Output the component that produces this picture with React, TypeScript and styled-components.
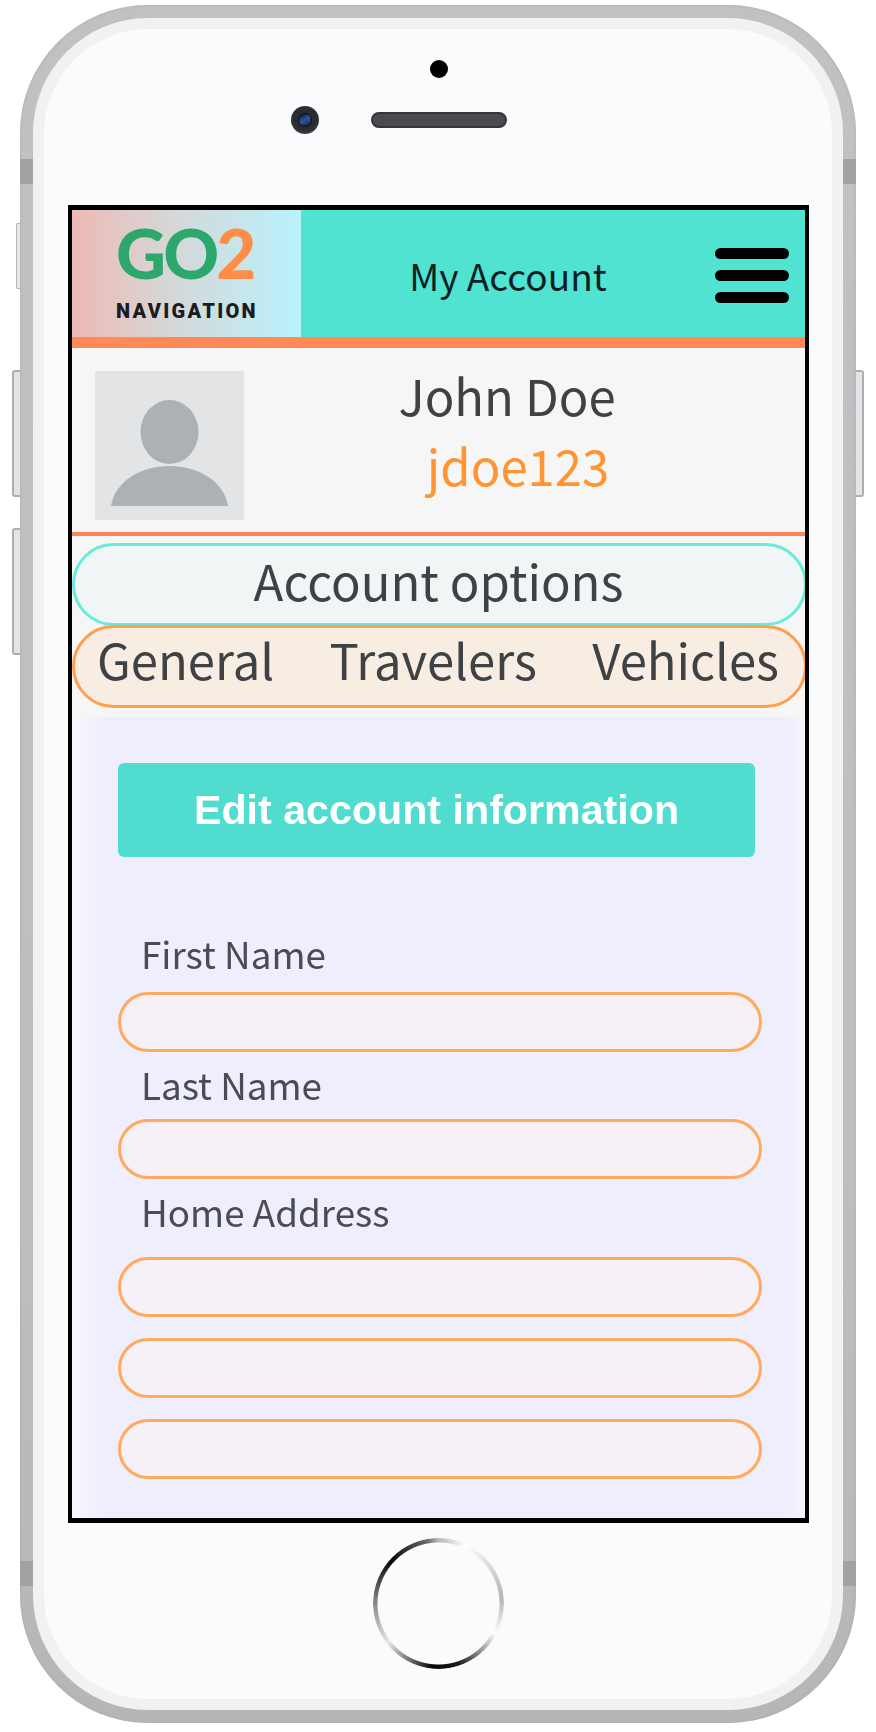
import React, { FC } from 'react';
import styled, { createGlobalStyle } from 'styled-components';

const GlobalStyle = createGlobalStyle`
  html, body {
    margin: 0;
    padding: 0;
    background: #ffffff;
  }
  * {
    box-sizing: border-box;
  }
`;

const UI_FONT = `'Noto Sans CJK SC', 'Noto Sans', sans-serif`;

const App: FC = () => {
  return (
    <Page>
      <GlobalStyle />
      <Phone>
        <MuteSwitch />
        <VolumeKey $top={365} />
        <VolumeKey $top={523} />
        <PowerKey />
        <AntennaBand $top={154} $side="left" />
        <AntennaBand $top={154} $side="right" />
        <AntennaBand $top={1556} $side="left" />
        <AntennaBand $top={1556} $side="right" />
        <Bezel>
          <Face>
            <Sensors>
              <Dot />
              <EarRow>
                <Camera>
                  <Lens />
                </Camera>
                <Speaker />
                <span />
              </EarRow>
            </Sensors>
            <Screen>
              <ScreenContent>
                <Header>
                  <LogoBox>
                    <LogoMark>
                      <LogoGreen>GO</LogoGreen>
                      <LogoOrange>2</LogoOrange>
                    </LogoMark>
                    <LogoWord>NAVIGATION</LogoWord>
                  </LogoBox>
                  <HeaderTitle>My Account</HeaderTitle>
                  <Burger>
                    <BurgerBar />
                    <BurgerBar />
                    <BurgerBar />
                  </Burger>
                </Header>
                <Profile>
                  <Avatar>
                    <svg width="149" height="149" viewBox="0 0 149 149">
                      <rect width="149" height="149" fill="#e2e4e6" />
                      <ellipse cx="74.5" cy="61" rx="29" ry="32" fill="#adb1b5" />
                      <path d="M16 135 C20 110 46 95 74.5 95 C103 95 129 110 133 135 Z" fill="#adb1b5" />
                    </svg>
                  </Avatar>
                  <Names>
                    <FullName>John Doe</FullName>
                    <UserName>jdoe123</UserName>
                  </Names>
                </Profile>
                <Divider />
                <OptionsPill>Account options</OptionsPill>
                <TabsPill>
                  <span>General</span>
                  <span>Travelers</span>
                  <span>Vehicles</span>
                </TabsPill>
                <Spacer />
                <Form>
                  <EditButton>Edit account information</EditButton>
                  <FieldLabel $first $after={3}>First Name</FieldLabel>
                  <FieldInput />
                  <FieldLabel $after={-1}>Last Name</FieldLabel>
                  <FieldInput />
                  <FieldLabel $after={10}>Home Address</FieldLabel>
                  <AddressStack>
                    <FieldInput />
                    <FieldInput />
                    <FieldInput />
                  </AddressStack>
                </Form>
              </ScreenContent>
            </Screen>
            <HomeZone>
              <HomeButton />
            </HomeZone>
          </Face>
        </Bezel>
      </Phone>
    </Page>
  );
};

export default App;

const Page = styled.div`
  width: 876px;
  height: 1732px;
  padding: 5px 20px 0;
  overflow: hidden;
`;

const Phone = styled.div`
  position: relative;
  width: 836px;
  height: 1718px;
  padding: 13px;
  border-radius: 128px;
  background: linear-gradient(180deg, #c0c1c3 0%, #bdbec0 70%, #b5b6b8 100%);
  box-shadow: inset 0 0 3px #a9aaac;
`;

const MuteSwitch = styled.div`
  position: absolute;
  left: -4px;
  top: 218px;
  width: 4px;
  height: 66px;
  background: #e6e7e8;
  border: 1px solid #b5b6b8;
  border-right: none;
  border-radius: 2px 0 0 2px;
`;

const VolumeKey = styled.div<{ $top: number }>`
  position: absolute;
  left: -8px;
  top: ${(p) => p.$top}px;
  width: 8px;
  height: 127px;
  background: #e3e4e5;
  border: 2px solid #adaeb0;
  border-right: none;
  border-radius: 3px 0 0 3px;
`;

const PowerKey = styled(VolumeKey).attrs({ $top: 365 })`
  left: auto;
  right: -8px;
  border: 2px solid #adaeb0;
  border-left: none;
  border-radius: 0 3px 3px 0;
`;

const AntennaBand = styled.div<{ $top: number; $side: 'left' | 'right' }>`
  position: absolute;
  top: ${(p) => p.$top}px;
  ${(p) => p.$side}: 0;
  width: 13px;
  height: 25px;
  background: #a1a2a4;
`;

const Bezel = styled.div`
  height: 100%;
  padding: 11px;
  border-radius: 115px;
  background: #f0f1f3;
`;

const Face = styled.div`
  height: 100%;
  padding: 0 23px 0 24px;
  border-radius: 104px;
  background: #fafbfd;
  display: flex;
  flex-direction: column;
`;

const Sensors = styled.div`
  height: 176px;
  padding-top: 31px;
  display: flex;
  flex-direction: column;
  align-items: center;
  flex-shrink: 0;
`;

const Dot = styled.div`
  width: 18px;
  height: 18px;
  border-radius: 50%;
  background: #000000;
`;

const EarRow = styled.div`
  width: 100%;
  margin-top: 28px;
  display: grid;
  grid-template-columns: 1fr 136px 1fr;
  align-items: center;
`;

const Camera = styled.div`
  justify-self: end;
  width: 28px;
  height: 28px;
  margin-right: 52px;
  border-radius: 50%;
  background: radial-gradient(circle at 50% 45%, #2a2c30 55%, #55585c 100%);
  display: grid;
  place-items: center;
`;

const Lens = styled.div`
  width: 14px;
  height: 14px;
  border-radius: 50%;
  background: linear-gradient(150deg, #0f1c3c 10%, #2e56a6 50%, #16233f 90%);
  border: 1px solid #0c0e14;
`;

const Speaker = styled.div`
  width: 136px;
  height: 16px;
  border-radius: 8px;
  background-color: #4a4b4e;
  background-image: radial-gradient(#6e6f72 35%, transparent 40%);
  background-size: 2px 2px;
  border: 2px solid #35363a;
`;

const Screen = styled.div`
  width: 741px;
  height: 1318px;
  border: 4.5px solid #000000;
  border-top-width: 5px;
  border-bottom-width: 5px;
  flex-shrink: 0;
  background: #f6f6f6;
  overflow: hidden;
`;

const ScreenContent = styled.div`
  width: calc(100% + 2px);
  height: 100%;
  display: flex;
  flex-direction: column;
  filter: blur(0.45px);
`;

const Header = styled.div`
  height: 138px;
  flex-shrink: 0;
  display: flex;
  border-bottom: 11px solid #ff8a58;
  background: #50e3d2;
`;

const LogoBox = styled.div`
  width: 229px;
  flex-shrink: 0;
  padding-left: 44px;
  padding-top: 10px;
  background: linear-gradient(90deg, #edbab4 0%, #d5d8d9 45%, #b9f2fc 100%);
`;

const LogoMark = styled.div`
  height: 66px;
  font-family: 'Lato', sans-serif;
  font-weight: 900;
  font-size: 69px;
  line-height: 66px;
  letter-spacing: -2.8px;
  white-space: nowrap;
`;

const LogoGreen = styled.span`
  color: #2ea76d;
`;

const LogoOrange = styled.span`
  color: #ff8d47;
`;

const LogoWord = styled.div`
  margin-top: 13px;
  font-family: 'Roboto', sans-serif;
  font-weight: 900;
  font-size: 20px;
  line-height: 24px;
  letter-spacing: 2.3px;
  color: #1c1c1e;
`;

const HeaderTitle = styled.div`
  flex: 1;
  padding-top: 2px;
  display: flex;
  align-items: center;
  justify-content: center;
  font-family: ${UI_FONT};
  font-size: 37px;
  color: #0f1f24;
`;

const Burger = styled.div`
  width: 74px;
  margin-right: 18px;
  padding-top: 38px;
  flex-shrink: 0;
  display: flex;
  flex-direction: column;
  gap: 11px;
`;

const BurgerBar = styled.div`
  height: 11px;
  border-radius: 6px;
  background: #000000;
`;

const Profile = styled.div`
  height: 184px;
  flex-shrink: 0;
  display: flex;
  padding: 23px 0 0 23px;
`;

const Avatar = styled.div`
  width: 149px;
  height: 149px;
  flex-shrink: 0;
  line-height: 0;
`;

const Names = styled.div`
  flex: 1;
  padding-right: 37px;
  display: flex;
  flex-direction: column;
  align-items: center;
  font-family: ${UI_FONT};
`;

const FullName = styled.div`
  font-size: 49px;
  line-height: 70px;
  margin-top: -11px;
  color: #3f4244;
`;

const UserName = styled.div`
  font-size: 49px;
  line-height: 70px;
  padding-left: 22px;
  color: #ff9430;
`;

const Divider = styled.div`
  height: 4px;
  flex-shrink: 0;
  margin-bottom: 7px;
  background: #ff8358;
`;

const Pill = styled.div`
  height: 83px;
  flex-shrink: 0;
  border-radius: 42px;
  border-style: solid;
  border-width: 3px;
  font-family: ${UI_FONT};
  font-size: 49px;
  color: #3f4244;
  display: flex;
  align-items: center;
`;

const OptionsPill = styled(Pill)`
  padding: 0 2px 11px 0;
  justify-content: center;
  background: #f0f5f5;
  border-color: #6be9de;
`;

const TabsPill = styled(Pill)`
  margin-top: -1px;
  padding: 0 25px 17px 22px;
  justify-content: space-between;
  background: #f8ede3;
  border-color: #ff9f4c;
`;

const Spacer = styled.div`
  height: 9px;
  flex-shrink: 0;
`;

const Form = styled.div`
  flex: 1;
  padding: 46px 45px 0 46px;
  background: linear-gradient(90deg, #f8f8ff 0, #eeeefc 32px, #eeeefc calc(100% - 22px), #f4f4fe calc(100% - 2px));
`;

const EditButton = styled.div`
  width: 637px;
  height: 94px;
  padding-top: 1px;
  border-radius: 6px;
  background: #50dccf;
  color: #ffffff;
  font-family: 'Liberation Sans', Arial, sans-serif;
  font-weight: 700;
  font-size: 41.2px;
  display: grid;
  place-items: center;
`;

const FieldLabel = styled.div<{ $first?: boolean; $after: number }>`
  height: 68px;
  margin-top: ${(p) => (p.$first ? 64 : 0)}px;
  margin-bottom: ${(p) => p.$after}px;
  padding-left: 23px;
  font-family: ${UI_FONT};
  font-size: 36.8px;
  line-height: 64px;
  color: #4a4c52;
`;

const FieldInput = styled.input.attrs(() => ({
  spellCheck: false,
}))`
  display: block;
  width: 644px;
  height: 60px;
  padding: 0 20px;
  outline: none;
  border: 3px solid #ffaa5e;
  border-radius: 30px;
  background: #f5f1f7;
`;

const AddressStack = styled.div`
  display: flex;
  flex-direction: column;
  gap: 21px;
`;

const HomeZone = styled.div`
  flex: 1;
  padding-top: 15px;
  display: flex;
  justify-content: center;
`;

const HomeButton = styled.div`
  width: 131px;
  height: 131px;
  border-radius: 50%;
  background: conic-gradient(
    #b8b8b8 0deg,
    #ffffff 25deg,
    #b4b4b4 85deg,
    #ffffff 118deg,
    #1a1a1a 162deg,
    #050505 185deg,
    #e8e8e8 232deg,
    #8a8a8a 270deg,
    #050505 312deg,
    #6a6a6a 350deg,
    #b8b8b8 360deg
  );
  -webkit-mask: radial-gradient(circle, transparent 60.5px, #000 61.5px);
  mask: radial-gradient(circle, transparent 60.5px, #000 61.5px);
`;
